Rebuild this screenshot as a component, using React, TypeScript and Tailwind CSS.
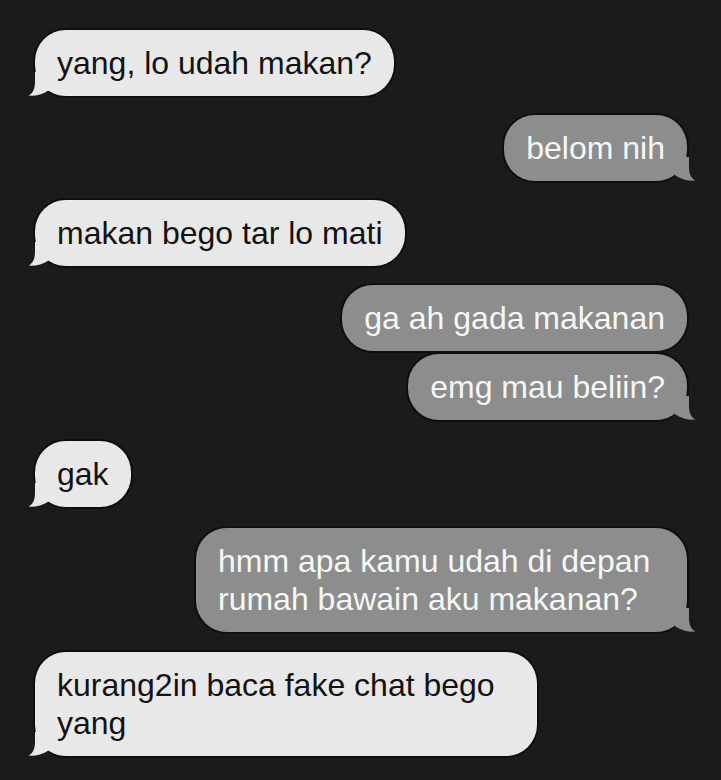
const messages = [
  { from: "them", lines: ["yang, lo udah makan?"], gap: "mt-0" },
  { from: "me", lines: ["belom nih"], gap: "mt-[19px]" },
  { from: "them", lines: ["makan bego tar lo mati"], gap: "mt-[19px]" },
  { from: "me", lines: ["ga ah gada makanan"], gap: "mt-[19px]", noTail: true },
  { from: "me", lines: ["emg mau beliin?"], gap: "mt-[3px]" },
  { from: "them", lines: ["gak"], gap: "mt-[21px]" },
  { from: "me", lines: ["hmm apa kamu udah di depan", "rumah bawain aku makanan?"], gap: "mt-[21px]", width: "w-[491px]" },
  { from: "them", lines: ["kurang2in baca fake chat bego", "yang"], gap: "mt-[20px]", width: "w-[502px]" },
]

// little hook at the bottom corner, flipped for my own bubbles
const Tail = ({ side, color }: { side: "left" | "right"; color: string }) => (
  <svg
    width="26"
    height="24"
    viewBox="0 0 26 24"
    className={side === "left" ? "absolute -left-[8px] bottom-0" : "absolute -right-[10px] bottom-0 -scale-x-100"}
  >
    <path d="M8 0 L8 9 C8 16.5 6.5 20.8 1.5 23.6 C8 24.3 15 22.6 22 18.2 L22 0 Z" fill={color} />
  </svg>
)

export default function App() {
  return (
    <div
      className="w-[721px] h-[780px] bg-[#1b1b1b] px-[34px] pt-[30px] flex flex-col overflow-hidden"
      style={{ fontFamily: '"Liberation Sans", Arial, sans-serif' }}
    >
      {messages.map((m, i) => {
        const mine = m.from === "me"
        const color = mine ? "#8d8d8d" : "#e8e8e8"
        return (
          <div key={i} className={`${m.gap} flex ${mine ? "justify-end" : "justify-start pl-px"}`}>
            <div
              className={`relative rounded-[31px] px-[22px] py-[14px] text-[32px] leading-[38px] shadow-[0_0_0_2px_#0e0e0e] ${m.width ?? ""} ${
                mine ? "bg-[#8d8d8d] text-[#f7f7f7]" : "bg-[#e8e8e8] text-[#121212]"
              }`}
            >
              {!m.noTail && <Tail side={mine ? "right" : "left"} color={color} />}
              <span className="relative whitespace-nowrap">
                {m.lines.map((l, j) => (
                  <span key={j} className="block">
                    {l}
                  </span>
                ))}
              </span>
            </div>
          </div>
        )
      })}
    </div>
  )
}
